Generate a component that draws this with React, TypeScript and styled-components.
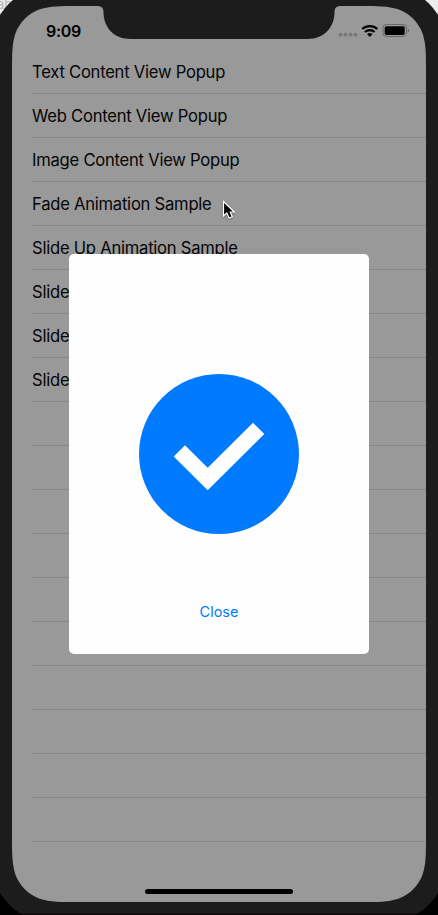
import React from "react";
import styled, { createGlobalStyle } from "styled-components";

const GlobalStyle = createGlobalStyle`
  * { box-sizing: border-box; }
  html, body { margin: 0; padding: 0; overflow: hidden; }
  body { font-family: Inter, "Liberation Sans", sans-serif; }
`;

/* Continuous-curvature rounded rectangle, as iOS devices use for their screens. */
const smoothRect = (w: number, h: number, r: number) => {
  const a = 1.528 * r, b = 1.088 * r, c = 0.868 * r, d = 0.631 * r;
  const e = 0.075 * r, f = 0.372 * r, g = 0.169 * r;
  return [
    `M${a} 0H${w - a}`,
    `C${w - b} 0 ${w - c} 0 ${w - d} ${e}C${w - f} ${g} ${w - g} ${f} ${w - e} ${d}C${w} ${c} ${w} ${b} ${w} ${a}V${h - a}`,
    `C${w} ${h - b} ${w} ${h - c} ${w - e} ${h - d}C${w - g} ${h - f} ${w - f} ${h - g} ${w - d} ${h - e}C${w - c} ${h} ${w - b} ${h} ${w - a} ${h}H${a}`,
    `C${b} ${h} ${c} ${h} ${d} ${h - e}C${f} ${h - g} ${g} ${h - f} ${e} ${h - d}C0 ${h - c} 0 ${h - b} 0 ${h - a}V${a}`,
    `C0 ${b} 0 ${c} ${e} ${d}C${g} ${f} ${f} ${g} ${d} ${e}C${c} 0 ${b} 0 ${a} 0Z`,
  ].join("");
};

const Desktop = styled.div`
  position: relative;
  width: 438px;
  height: 915px;
  padding: 6px 12px 13px;
  overflow: hidden;
  background: linear-gradient(#ececec 0 120px, #000 120px);
`;

const WindowBehind = styled.span`
  position: absolute;
  left: -3px;
  top: -4px;
  font-size: 13px;
  line-height: 16px;
  color: #b4b4b4;
`;

const Bezel = styled.div`
  position: absolute;
  inset: -16px -10px -9px;
  border-radius: 66px;
  background: linear-gradient(#1c1c1c 0 929px, #120d0e 929px);
`;

const Screen = styled.main`
  position: relative;
  display: flex;
  flex-direction: column;
  align-items: stretch;
  width: 414px;
  height: 896px;
  padding-bottom: 8px;
  background: #999;
  clip-path: path("${smoothRect(414, 896, 44)}");
`;

const StatusBar = styled.header`
  flex: none;
  display: flex;
  justify-content: space-between;
  height: 44px;
  padding: 17px 16px 0 34px;
`;

const Time = styled.span`
  font-size: 16px;
  line-height: 16px;
  font-weight: 600;
  letter-spacing: -0.3px;
  color: #000;
`;

const StatusIcons = styled.svg`
  display: block;
  width: 74px;
  height: 16px;
`;

const Notch = styled.svg`
  display: block;
  width: 244px;
  height: 33px;
`;

const List = styled.ul`
  display: flex;
  flex-direction: column;
  margin: 0;
  padding: 0 0 0 20px;
  list-style: none;
`;

const Row = styled.li`
  display: flex;
  align-items: center;
  height: 44px;
  padding-top: 1px;
  border-bottom: 1px solid #868686;
  font-size: 16.6px;
  line-height: 20px;
  letter-spacing: -0.24px;
  white-space: nowrap;
  color: #050505;
`;

const HomeIndicator = styled.div`
  align-self: center;
  margin-top: auto;
  width: 148px;
  height: 5px;
  border-radius: 3px;
  background: #000;
`;

const Overlay = styled.div<{ $align: "start" | "center" }>`
  position: absolute;
  inset: 0;
  display: flex;
  justify-content: center;
  align-items: ${(p) => p.$align};
`;

const Popup = styled.section`
  display: flex;
  flex-direction: column;
  align-items: center;
  width: 300px;
  height: 400px;
  padding-top: 120px;
  border-radius: 5px;
  background: #fefefe;
`;

const CheckBadge = styled.svg`
  display: block;
  width: 160px;
  height: 160px;
`;

const CloseButton = styled.button`
  margin: 68px 0 0;
  padding: 0;
  border: 0;
  background: none;
  font: 400 14.5px/20px Inter, "Liberation Sans", sans-serif;
  color: #007aff;
`;

const Cursor = styled.svg`
  position: absolute;
  left: 221px;
  top: 199px;
  width: 18px;
  height: 24px;
  filter: drop-shadow(0 1px 1px rgba(0, 0, 0, 0.35));
`;

const samples = [
  "Text Content View Popup",
  "Web Content View Popup",
  "Image Content View Popup",
  "Fade Animation Sample",
  "Slide Up Animation Sample",
  "Slide Down Animation Sample",
  "Slide Left Animation Sample",
  "Slide Right Animation Sample",
];

const rows = [...samples, ...Array.from({ length: 10 }, () => "")];

export default function App() {
  return (
    <>
      <GlobalStyle />
      <Desktop>
        <WindowBehind>abe</WindowBehind>
        <Bezel />
        <Screen>
          <StatusBar>
            <Time>9:09</Time>
            <StatusIcons viewBox="0 0 74 16">
              <g fill="#7a7a7a">
                <circle cx="4.5" cy="11.8" r="2" />
                <circle cx="9.5" cy="11.8" r="2" />
                <circle cx="14.5" cy="11.8" r="2" />
                <circle cx="19.5" cy="11.8" r="2" />
              </g>
              <g fill="none" stroke="#000" strokeWidth="2.2">
                <path d="M26.2 6a11.5 11.5 0 0 1 15.2 0" />
                <path d="M29 9a7.1 7.1 0 0 1 9.600 0" />
              </g>
              <path d="M31.100 11.200a4 4 0 0 1 5.400 0L33.800 13.900z" fill="#000" />
              <rect x="47" y="1.500" width="23.500" height="12" rx="3.400" fill="none" stroke="#686868" />
              <rect x="48.700" y="3.200" width="20" height="8.700" rx="1.600" fill="#000" />
              <path d="M71.800 5.500q1.500.5 1.500 2t-1.500 2z" fill="#686868" />
            </StatusIcons>
          </StatusBar>
          <List>
            {rows.map((label, i) => (
              <Row key={i}>{label}</Row>
            ))}
          </List>
          <HomeIndicator />
          <Overlay $align="start">
            <Notch viewBox="0 0 244 33">
              <path
                d="M0 0H244C239.500 0 237.500 2 237.500 6C237.500 22 226.500 33 210.500 33H33.500C17.500 33 6.500 22 6.500 6C6.500 2 4.500 0 0 0Z"
                fill="#1c1c1c"
              />
            </Notch>
          </Overlay>
          <Overlay $align="center">
            <Popup role="dialog">
              <CheckBadge viewBox="0 0 160 160">
                <circle cx="80" cy="80" r="80" fill="#007aff" />
                <path d="M34.700 82.500L46 71.200L68.700 93.700L114 48.800L125.300 60L68.700 116.200Z" fill="#fefefe" />
              </CheckBadge>
              <CloseButton>Close</CloseButton>
            </Popup>
          </Overlay>
        </Screen>
        <Cursor viewBox="0 0 18 24">
          <path
            d="M2.500 2.500V17L5.800 14L8.200 19L11.300 17.700L9.200 13H13.300Z"
            fill="#000"
            stroke="#fff"
            strokeWidth="1.200"
          />
        </Cursor>
      </Desktop>
    </>
  );
}
